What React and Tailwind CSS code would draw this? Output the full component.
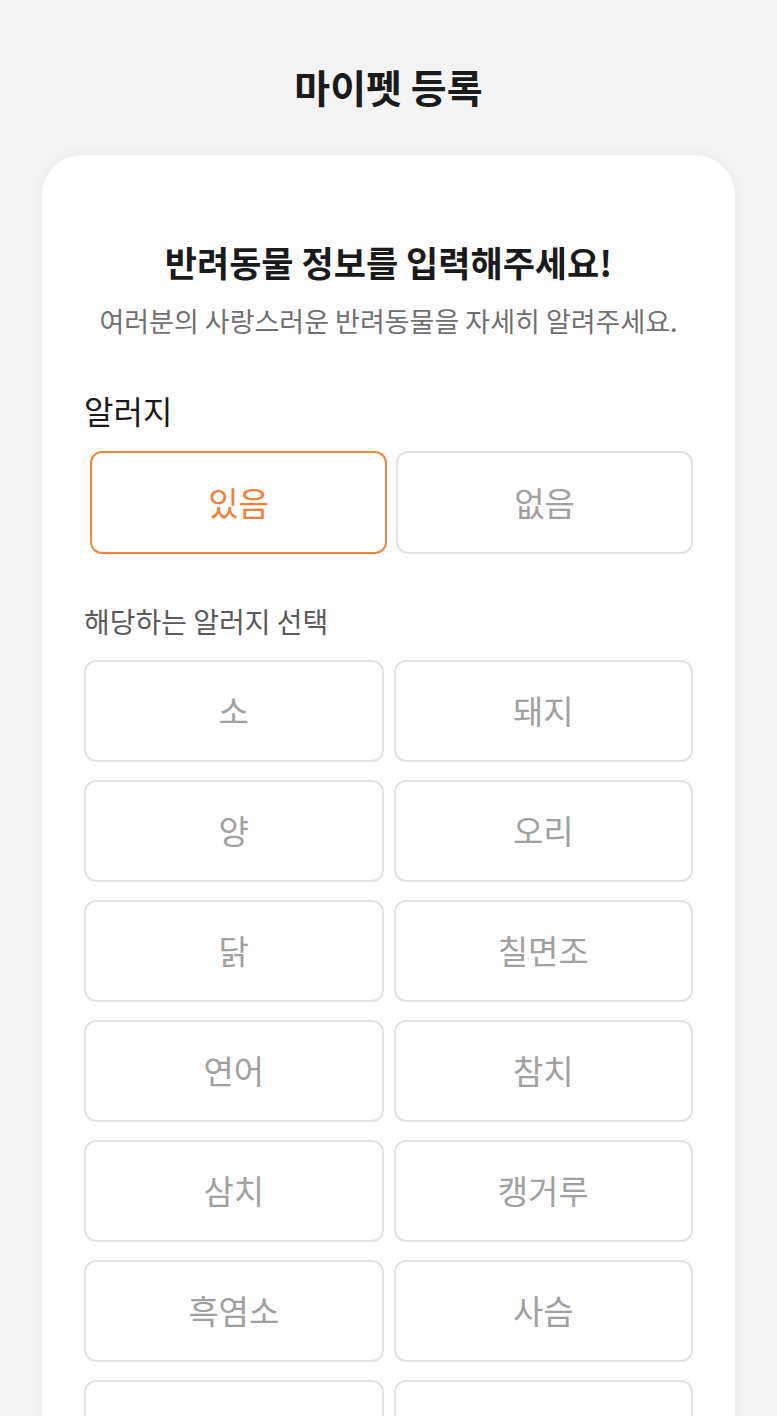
import { useState } from 'react';

const ALLERGIES = [
  '소', '돼지', '양', '오리', '닭', '칠면조', '연어', '참치',
  '삼치', '캥거루', '흑염소', '사슴', '토끼', '메추리',
];

export default function App() {
  const [hasAllergy, setHasAllergy] = useState(true);
  const [picked, setPicked] = useState([]);

  const toggle = (name) => {
    setPicked((prev) =>
      prev.includes(name) ? prev.filter((p) => p !== name) : [...prev, name]
    );
  };

  return (
    <div
      className="min-h-[1416px] bg-[#f4f4f4] flex flex-col items-center"
      style={{ fontFamily: '"Noto Sans CJK KR", "Noto Sans", sans-serif' }}
    >
      <h1 className="mt-[58px] text-[39px] leading-[56px] font-bold text-[#1a1a1a]">
        마이펫 등록
      </h1>

      <div className="mt-[41px] w-[693px] bg-white rounded-t-[40px] shadow-[0_0_16px_rgba(0,0,0,0.05)] px-[42px] pt-[85px] pb-[40px]">
        <h2 className="text-center text-[35px] leading-[44px] font-bold text-[#1a1a1a]">
          반려동물 정보를 입력해주세요!
        </h2>
        <p className="mt-[20px] text-center text-[27px] leading-[34px] text-[#707070]">
          여러분의 사랑스러운 반려동물을 자세히 알려주세요.
        </p>

        <div className="mt-[52px] text-[32px] leading-[40px] text-[#1a1a1a]">
          알러지
        </div>

        <div className="mt-[21px] pl-[6px] grid grid-cols-2 gap-[9px]">
          <button
            onClick={() => setHasAllergy(true)}
            className={`h-[103px] rounded-[12px] border-2 bg-white text-[33px] ${
              hasAllergy
                ? 'border-[#f0873e] text-[#f0803a]'
                : 'border-[#e2e2e2] text-[#a0a0a0]'
            }`}
          >
            있음
          </button>
          <button
            onClick={() => setHasAllergy(false)}
            className={`h-[103px] rounded-[12px] border-2 bg-white text-[33px] ${
              !hasAllergy
                ? 'border-[#f0873e] text-[#f0803a]'
                : 'border-[#e2e2e2] text-[#a0a0a0]'
            }`}
          >
            없음
          </button>
        </div>

        <div className="mt-[49px] text-[28px] leading-[36px] text-[#5a5a5a]">
          해당하는 알러지 선택
        </div>

        <div className="mt-[21px] grid grid-cols-2 gap-x-[10px] gap-y-[18px]">
          {ALLERGIES.map((name) => {
            const on = picked.includes(name);
            return (
              <button
                key={name}
                onClick={() => toggle(name)}
                className={`h-[102px] rounded-[12px] border-2 bg-white text-[33px] ${
                  on
                    ? 'border-[#f0873e] text-[#f0803a]'
                    : 'border-[#e2e2e2] text-[#a0a0a0]'
                }`}
              >
                {name}
              </button>
            );
          })}
        </div>
      </div>
    </div>
  );
}
